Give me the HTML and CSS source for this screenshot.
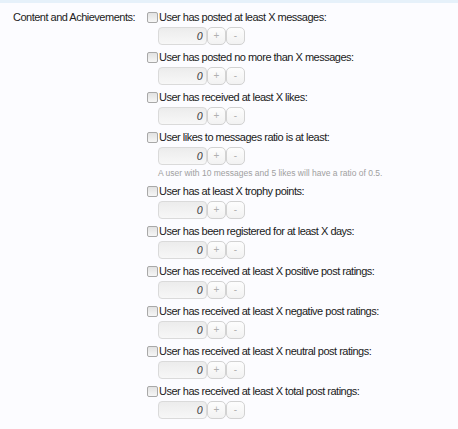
FILE: index.html
```html
<!DOCTYPE html>
<html lang="en">

<head>
    <meta charset="UTF-8">
    <title>Criteria</title>
    <link rel="stylesheet" href="styles.css">
</head>

<body>
    <div class="form-panel">
        <dl class="ctrl-unit">
            <dt>Content and Achievements:</dt>
            <dd>
                <ul class="criteria-list">
                    <li>
                        <label><input type="checkbox"> User has posted at least X messages:</label>
                        <div class="spin-box"><input type="text" value="0"><button>+</button><button>-</button></div>
                    </li>
                    <li>
                        <label><input type="checkbox"> User has posted no more than X messages:</label>
                        <div class="spin-box"><input type="text" value="0"><button>+</button><button>-</button></div>
                    </li>
                    <li>
                        <label><input type="checkbox"> User has received at least X likes:</label>
                        <div class="spin-box"><input type="text" value="0"><button>+</button><button>-</button></div>
                    </li>
                    <li>
                        <label><input type="checkbox"> User likes to messages ratio is at least:</label>
                        <div class="spin-box"><input type="text" value="0"><button>+</button><button>-</button></div>
                        <p class="explain">A user with 10 messages and 5 likes will have a ratio of 0.5.</p>
                    </li>
                    <li>
                        <label><input type="checkbox"> User has at least X trophy points:</label>
                        <div class="spin-box"><input type="text" value="0"><button>+</button><button>-</button></div>
                    </li>
                    <li>
                        <label><input type="checkbox"> User has been registered for at least X days:</label>
                        <div class="spin-box"><input type="text" value="0"><button>+</button><button>-</button></div>
                    </li>
                    <li>
                        <label><input type="checkbox"> User has received at least X positive post ratings:</label>
                        <div class="spin-box"><input type="text" value="0"><button>+</button><button>-</button></div>
                    </li>
                    <li>
                        <label><input type="checkbox"> User has received at least X negative post ratings:</label>
                        <div class="spin-box"><input type="text" value="0"><button>+</button><button>-</button></div>
                    </li>
                    <li>
                        <label><input type="checkbox"> User has received at least X neutral post ratings:</label>
                        <div class="spin-box"><input type="text" value="0"><button>+</button><button>-</button></div>
                    </li>
                    <li>
                        <label><input type="checkbox"> User has received at least X total post ratings:</label>
                        <div class="spin-box"><input type="text" value="0"><button>+</button><button>-</button></div>
                    </li>
                </ul>
            </dd>
        </dl>
    </div>
</body>

</html>
```
FILE: styles.css
```css
html, body {
    margin: 0;
    padding: 0;
    background: #fcfcff;
}

body {
    font-family: 'Liberation Sans', Arial, sans-serif;
    font-size: 11px;
    letter-spacing: -0.5px;
    color: #1a1a1a;
}

.form-panel {
    border-top: 3px solid #e6f1fa;
    padding-top: 6px;
    height: 420px;
}

.ctrl-unit {
    display: flex;
    margin: 0;
}

.ctrl-unit dt {
    width: 135px;
    flex-shrink: 0;
    text-align: right;
    line-height: 16px;
    white-space: nowrap;
    color: #222;
}

.ctrl-unit dd {
    margin: 0 0 0 11px;
}

.criteria-list {
    list-style: none;
    margin: 0;
    padding: 0;
}

.criteria-list li {
    margin-bottom: 4px;
}

.criteria-list label {
    display: flex;
    align-items: center;
    line-height: 16px;
    gap: 1px;
    white-space: nowrap;
}

.criteria-list label input {
    appearance: none;
    width: 11px;
    height: 11px;
    margin: 0 0 0 1px;
    border: 1px solid #a8a8a8;
    border-radius: 2px;
    background: linear-gradient(to bottom, #e2e2e2, #f6f6f6);
    box-sizing: border-box;
}

.spin-box {
    display: flex;
    margin: 2px 0 0 12px;
    height: 18px;
}

.spin-box input {
    width: 49px;
    height: 18px;
    box-sizing: border-box;
    border: 1px solid #dadada;
    border-radius: 4px;
    background: linear-gradient(to bottom, #ececec, #f7f7f7);
    text-align: right;
    font-family: 'DejaVu Sans', sans-serif;
    font-size: 10px;
    font-style: italic;
    letter-spacing: 0;
    color: #444;
    padding: 0 3px;
    outline: none;
}

.spin-box button {
    width: 19px;
    height: 18px;
    padding: 0;
    border: 1px solid #d2d2d2;
    border-radius: 5px;
    background: linear-gradient(to bottom, #fdfdfd, #f2f2f2);
    color: #b0b0b0;
    font-family: 'Liberation Sans', sans-serif;
    font-size: 10px;
    letter-spacing: 0;
    line-height: 16px;
}

.explain {
    margin: 2px 0 0 12px;
    font-size: 8.5px;
    letter-spacing: 0;
    line-height: 12px;
    color: #a0a0a0;
}
```
